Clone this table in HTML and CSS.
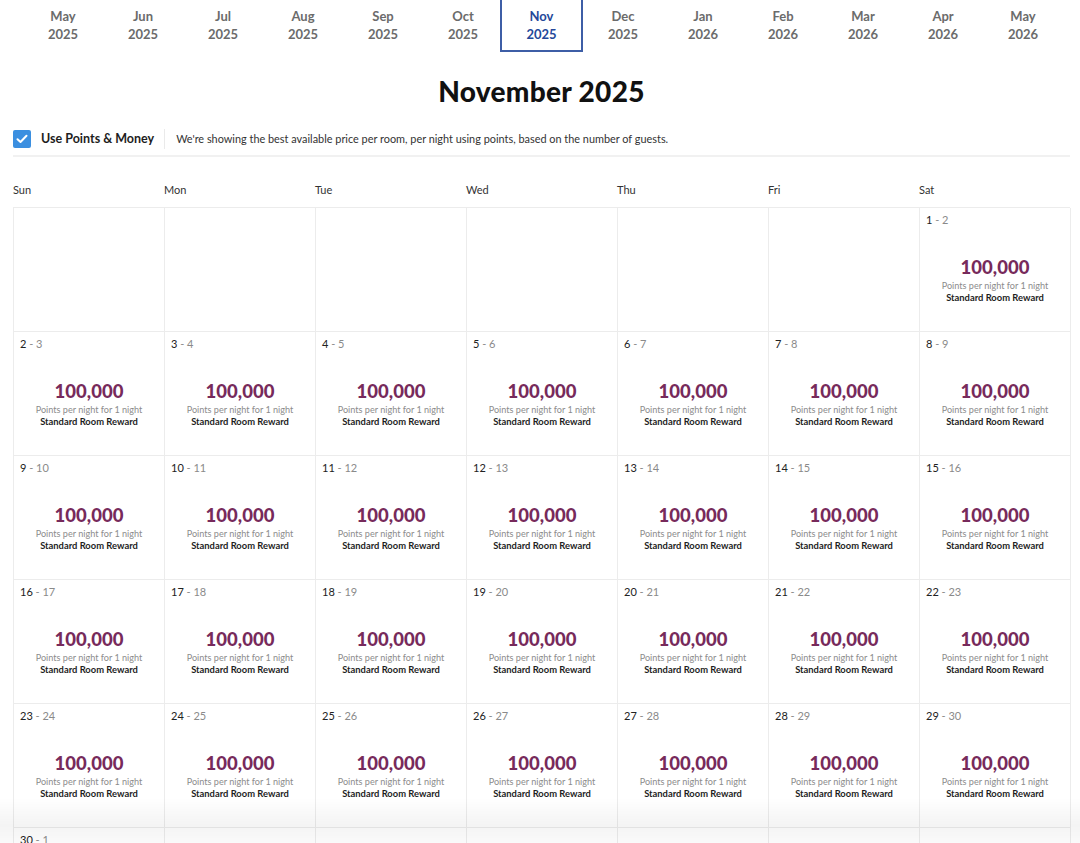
FILE: index.html
```html
<!DOCTYPE html>
<html lang="en">
<head>
<meta charset="utf-8">
<title>Calendar</title>
<link rel="stylesheet" href="styles.css">
</head>
<body>
<div class="page">
  <nav class="months">
    <div class="tab"><span>May</span><span>2025</span></div>
    <div class="tab"><span>Jun</span><span>2025</span></div>
    <div class="tab"><span>Jul</span><span>2025</span></div>
    <div class="tab"><span>Aug</span><span>2025</span></div>
    <div class="tab"><span>Sep</span><span>2025</span></div>
    <div class="tab"><span>Oct</span><span>2025</span></div>
    <div class="tab active"><span>Nov</span><span>2025</span></div>
    <div class="tab"><span>Dec</span><span>2025</span></div>
    <div class="tab"><span>Jan</span><span>2026</span></div>
    <div class="tab"><span>Feb</span><span>2026</span></div>
    <div class="tab"><span>Mar</span><span>2026</span></div>
    <div class="tab"><span>Apr</span><span>2026</span></div>
    <div class="tab"><span>May</span><span>2026</span></div>
  </nav>

  <h1 class="title">November 2025</h1>

  <div class="options">
    <label class="check">
      <span class="box"><svg width="12" height="10" viewBox="0 0 12 10"><path d="M1.5 5.2 L4.5 8 L10.5 1.8" fill="none" stroke="#fff" stroke-width="2" stroke-linecap="round" stroke-linejoin="round"/></svg></span>
      <span class="check-label">Use Points &amp; Money</span>
    </label>
    <span class="divider"></span>
    <span class="desc">We're showing the best available price per room, per night using points, based on the number of guests.</span>
  </div>

  <div class="weekdays">
    <div>Sun</div><div>Mon</div><div>Tue</div><div>Wed</div><div>Thu</div><div>Fri</div><div>Sat</div>
  </div>

  <div class="grid" id="grid">
    <div class="cell"></div><div class="cell"></div><div class="cell"></div><div class="cell"></div><div class="cell"></div><div class="cell"></div>
    <div class="cell"><div class="date"><b>1</b> - 2</div><div class="rate"><div class="price">100,000</div><div class="sub">Points per night for 1 night</div><div class="type">Standard Room Reward</div></div></div>
    <div class="cell"><div class="date"><b>2</b> - 3</div><div class="rate"><div class="price">100,000</div><div class="sub">Points per night for 1 night</div><div class="type">Standard Room Reward</div></div></div>
    <div class="cell"><div class="date"><b>3</b> - 4</div><div class="rate"><div class="price">100,000</div><div class="sub">Points per night for 1 night</div><div class="type">Standard Room Reward</div></div></div>
    <div class="cell"><div class="date"><b>4</b> - 5</div><div class="rate"><div class="price">100,000</div><div class="sub">Points per night for 1 night</div><div class="type">Standard Room Reward</div></div></div>
    <div class="cell"><div class="date"><b>5</b> - 6</div><div class="rate"><div class="price">100,000</div><div class="sub">Points per night for 1 night</div><div class="type">Standard Room Reward</div></div></div>
    <div class="cell"><div class="date"><b>6</b> - 7</div><div class="rate"><div class="price">100,000</div><div class="sub">Points per night for 1 night</div><div class="type">Standard Room Reward</div></div></div>
    <div class="cell"><div class="date"><b>7</b> - 8</div><div class="rate"><div class="price">100,000</div><div class="sub">Points per night for 1 night</div><div class="type">Standard Room Reward</div></div></div>
    <div class="cell"><div class="date"><b>8</b> - 9</div><div class="rate"><div class="price">100,000</div><div class="sub">Points per night for 1 night</div><div class="type">Standard Room Reward</div></div></div>
    <div class="cell"><div class="date"><b>9</b> - 10</div><div class="rate"><div class="price">100,000</div><div class="sub">Points per night for 1 night</div><div class="type">Standard Room Reward</div></div></div>
    <div class="cell"><div class="date"><b>10</b> - 11</div><div class="rate"><div class="price">100,000</div><div class="sub">Points per night for 1 night</div><div class="type">Standard Room Reward</div></div></div>
    <div class="cell"><div class="date"><b>11</b> - 12</div><div class="rate"><div class="price">100,000</div><div class="sub">Points per night for 1 night</div><div class="type">Standard Room Reward</div></div></div>
    <div class="cell"><div class="date"><b>12</b> - 13</div><div class="rate"><div class="price">100,000</div><div class="sub">Points per night for 1 night</div><div class="type">Standard Room Reward</div></div></div>
    <div class="cell"><div class="date"><b>13</b> - 14</div><div class="rate"><div class="price">100,000</div><div class="sub">Points per night for 1 night</div><div class="type">Standard Room Reward</div></div></div>
    <div class="cell"><div class="date"><b>14</b> - 15</div><div class="rate"><div class="price">100,000</div><div class="sub">Points per night for 1 night</div><div class="type">Standard Room Reward</div></div></div>
    <div class="cell"><div class="date"><b>15</b> - 16</div><div class="rate"><div class="price">100,000</div><div class="sub">Points per night for 1 night</div><div class="type">Standard Room Reward</div></div></div>
    <div class="cell"><div class="date"><b>16</b> - 17</div><div class="rate"><div class="price">100,000</div><div class="sub">Points per night for 1 night</div><div class="type">Standard Room Reward</div></div></div>
    <div class="cell"><div class="date"><b>17</b> - 18</div><div class="rate"><div class="price">100,000</div><div class="sub">Points per night for 1 night</div><div class="type">Standard Room Reward</div></div></div>
    <div class="cell"><div class="date"><b>18</b> - 19</div><div class="rate"><div class="price">100,000</div><div class="sub">Points per night for 1 night</div><div class="type">Standard Room Reward</div></div></div>
    <div class="cell"><div class="date"><b>19</b> - 20</div><div class="rate"><div class="price">100,000</div><div class="sub">Points per night for 1 night</div><div class="type">Standard Room Reward</div></div></div>
    <div class="cell"><div class="date"><b>20</b> - 21</div><div class="rate"><div class="price">100,000</div><div class="sub">Points per night for 1 night</div><div class="type">Standard Room Reward</div></div></div>
    <div class="cell"><div class="date"><b>21</b> - 22</div><div class="rate"><div class="price">100,000</div><div class="sub">Points per night for 1 night</div><div class="type">Standard Room Reward</div></div></div>
    <div class="cell"><div class="date"><b>22</b> - 23</div><div class="rate"><div class="price">100,000</div><div class="sub">Points per night for 1 night</div><div class="type">Standard Room Reward</div></div></div>
    <div class="cell"><div class="date"><b>23</b> - 24</div><div class="rate"><div class="price">100,000</div><div class="sub">Points per night for 1 night</div><div class="type">Standard Room Reward</div></div></div>
    <div class="cell"><div class="date"><b>24</b> - 25</div><div class="rate"><div class="price">100,000</div><div class="sub">Points per night for 1 night</div><div class="type">Standard Room Reward</div></div></div>
    <div class="cell"><div class="date"><b>25</b> - 26</div><div class="rate"><div class="price">100,000</div><div class="sub">Points per night for 1 night</div><div class="type">Standard Room Reward</div></div></div>
    <div class="cell"><div class="date"><b>26</b> - 27</div><div class="rate"><div class="price">100,000</div><div class="sub">Points per night for 1 night</div><div class="type">Standard Room Reward</div></div></div>
    <div class="cell"><div class="date"><b>27</b> - 28</div><div class="rate"><div class="price">100,000</div><div class="sub">Points per night for 1 night</div><div class="type">Standard Room Reward</div></div></div>
    <div class="cell"><div class="date"><b>28</b> - 29</div><div class="rate"><div class="price">100,000</div><div class="sub">Points per night for 1 night</div><div class="type">Standard Room Reward</div></div></div>
    <div class="cell"><div class="date"><b>29</b> - 30</div><div class="rate"><div class="price">100,000</div><div class="sub">Points per night for 1 night</div><div class="type">Standard Room Reward</div></div></div>
    <div class="cell"><div class="date"><b>30</b> - 1</div></div>
    <div class="cell"></div><div class="cell"></div><div class="cell"></div><div class="cell"></div><div class="cell"></div><div class="cell"></div>
  </div>
</div>
<div class="fade"></div>
</body>
</html>
```

FILE: styles.css
```css
html, body {
  margin: 0;
  padding: 0;
  background: #fff;
  overflow: hidden;
}
body {
  font-family: Lato, "Open Sans", "Liberation Sans", sans-serif;
  color: #222;
  height: 843px;
}
.page {
  padding: 0 10px 0 13px;
}
.months {
  display: flex;
  padding-left: 10px;
  height: 52px;
}
.tab {
  width: 80px;
  box-sizing: border-box;
  display: flex;
  flex-direction: column;
  align-items: center;
  padding-top: 7px;
  font-size: 13px;
  font-weight: 700;
  line-height: 18px;
  color: #6b6b6b;
}
.tab.active {
  color: #24489a;
  border: 2px solid #3e5ea6;
  border-top: none;
  padding-top: 7px;
  width: 83px;
  margin-left: -3px;
}
.title {
  margin: 0;
  height: 70px;
  display: flex;
  align-items: center;
  justify-content: center;
  font-size: 28px;
  font-weight: 900;
  color: #111;
  letter-spacing: 0.3px;
  padding-top: 8px;
  box-sizing: border-box;
}
.options {
  display: flex;
  align-items: center;
  height: 33px;
  border-bottom: 2px solid #f1f1f1;
}
.check {
  display: flex;
  align-items: center;
}
.box {
  width: 18px;
  height: 18px;
  background: #3b8fe0;
  border-radius: 2px;
  display: flex;
  align-items: center;
  justify-content: center;
}
.check-label {
  margin-left: 10px;
  font-size: 12.5px;
  font-weight: 700;
  color: #1d1d1d;
}
.divider {
  width: 1px;
  height: 20px;
  background: #eaeaea;
  margin: 0 11px 0 10px;
}
.desc {
  font-size: 10.9px;
  color: #333;
}
.weekdays {
  display: grid;
  grid-template-columns: repeat(7, 151px);
  height: 50px;
  align-items: end;
  padding-bottom: 10px;
  line-height: 14px;
  font-size: 11px;
  color: #333;
  box-sizing: border-box;
}
.grid {
  display: grid;
  grid-template-columns: repeat(7, 151px);
  grid-auto-rows: 124px;
  border-top: 1px solid #ececec;
  border-left: 1px solid #ececec;
}
.cell {
  border-right: 1px solid #ececec;
  border-bottom: 1px solid #ececec;
  padding: 5px 6px;
  box-sizing: border-box;
  display: flex;
  flex-direction: column;
}
.date {
  font-size: 11px;
  line-height: 14px;
  color: #8a8a8a;
}
.date b {
  font-weight: 400;
  color: #222;
}
.rate {
  margin-top: 29px;
  display: flex;
  flex-direction: column;
  align-items: center;
  text-align: center;
}
.price {
  font-size: 18.5px;
  font-weight: 900;
  line-height: 22px;
  color: #772a5b;
  margin-bottom: 2px;
}
.sub {
  font-size: 9.1px;
  line-height: 12px;
  color: #8c8c8c;
}
.type {
  font-size: 9.4px;
  line-height: 12px;
  font-weight: 700;
  color: #1e1e1e;
}
.fade {
  position: fixed;
  left: 0;
  right: 0;
  bottom: 0;
  height: 45px;
  background: linear-gradient(to bottom, rgba(0,0,0,0) 0%, rgba(0,0,0,0.045) 60%, rgba(0,0,0,0.02) 100%);
  pointer-events: none;
}
```
